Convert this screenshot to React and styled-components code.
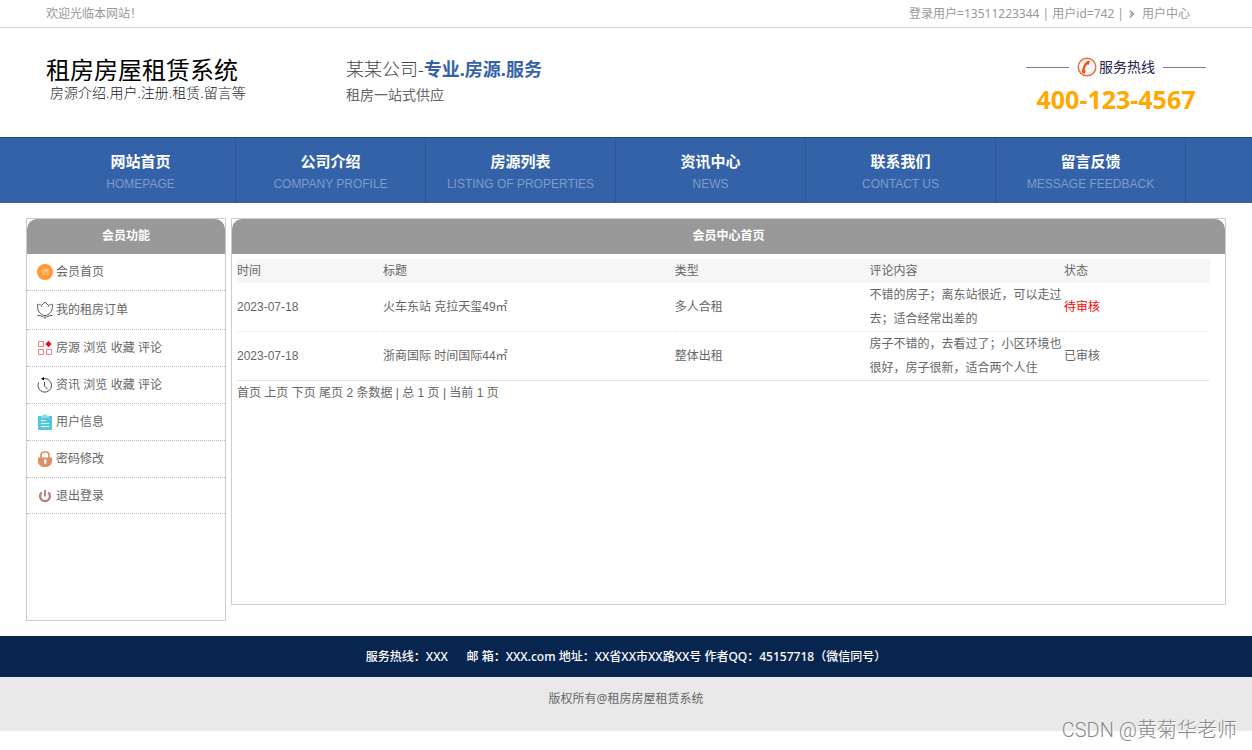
import React from "react";
import styled, { createGlobalStyle } from "styled-components";

const GlobalStyle = createGlobalStyle`
  * { box-sizing: border-box; }
  body {
    margin: 0;
    background: #fff;
    color: #666;
    font: 12px/24px "Liberation Sans", "Noto Sans CJK SC", sans-serif;
  }
  a { color: inherit; text-decoration: none; }
  ul, p, h1, h2 { margin: 0; padding: 0; list-style: none; }
`;

const uiFont = `"Noto Sans", "Noto Sans CJK SC", sans-serif`;

const Page = styled.div`
  position: relative;
  min-height: 750px;
`;

const Wrap = styled.div`
  max-width: 1160px;
  margin: 0 auto;
`;

const TopBar = styled.div`
  border-bottom: 1px solid #d9d9d9;
  color: #999;
  font-family: ${uiFont};
  line-height: 27px;
`;

const TopInner = styled(Wrap)`
  display: flex;
  justify-content: space-between;
  padding-right: 16px;
`;

const UserInfo = styled.div`
  display: flex;
  align-items: center;
  svg { margin: 0 7px 0 5px; }
`;

const HeaderInner = styled(Wrap)`
  display: flex;
  align-items: flex-start;
  height: 109px;
  padding-top: 27px;
  font-family: ${uiFont};
`;

const Brand = styled.div`
  flex: 0 0 300px;
`;

const BrandTitle = styled.h1`
  color: #000;
  font-size: 24px;
  font-weight: 400;
  line-height: 30px;
`;

const BrandSub = styled.p`
  padding-left: 4px;
  color: #222;
  font-size: 14px;
  font-weight: 300;
  line-height: 16px;
`;

const Slogan = styled.div`
  flex: 1;
`;

const SloganTitle = styled.h2`
  color: #444;
  font-size: 18px;
  font-weight: 300;
  line-height: 29px;
  strong { color: #3462a9; font-weight: 700; }
`;

const SloganSub = styled.p`
  font-size: 14px;
  line-height: 22px;
`;

const Hotline = styled.div`
  flex: 0 0 180px;
  text-align: center;
`;

const HotlineLabel = styled.div`
  display: flex;
  align-items: center;
  gap: 8px;
  color: #26224f;
  font-size: 14px;
  line-height: 24px;
  &::before, &::after {
    content: "";
    flex: 1;
    height: 1px;
    background: #7d77b3;
  }
  span { display: flex; align-items: center; gap: 2px; }
`;

const HotlineNumber = styled.div`
  color: #ffa800;
  font-size: 25px;
  font-weight: 700;
  line-height: 40px;
`;

const Nav = styled.nav`
  border-top: 1px solid #23477f;
  background: #3462a9;
`;

const NavList = styled(Wrap).attrs({ as: "ul" })`
  display: flex;
`;

const NavItem = styled.li`
  flex: 0 1 190px;
  border-right: 1px solid #2b5597;
  text-align: center;
`;

const NavLink = styled.a`
  display: block;
  height: 65px;
  padding-top: 12px;
  color: #fff;
  font-size: 15px;
  font-weight: 700;
  line-height: 24px;
  small {
    display: block;
    color: #7d9bcb;
    font-size: 12px;
    font-weight: 400;
    line-height: 20px;
  }
`;

const Main = styled.main`
  display: flex;
  align-items: flex-start;
  gap: 5px;
  max-width: 1200px;
  margin: 15px auto;
`;

const Panel = styled.section`
  flex: ${(p) => (p.$side ? "0 0 200px" : "1")};
  min-width: 0;
  min-height: ${(p) => (p.$side ? "403px" : "387px")};
  border: 1px solid #ccc;
`;

const PanelTitle = styled.h2`
  border-radius: 10px 10px 0 0;
  background: #999;
  color: #fff;
  font-size: 12px;
  line-height: 35px;
  text-align: center;
`;

const MenuItem = styled.li`
  border-bottom: 1px dotted #bbb;
`;

const MenuLink = styled.a`
  display: flex;
  align-items: center;
  gap: 3px;
  height: ${(p) => p.$height}px;
  padding-left: 10px;
`;

const TableArea = styled.div`
  padding: 5px 15px 0 5px;
`;

const Table = styled.table`
  width: 100%;
  border-collapse: separate;
  border-spacing: 0;
  table-layout: fixed;
  th, td { padding: 0; font-weight: 400; text-align: left; }
  th { background: #f6f6f6; }
  td { border-bottom: 1px dotted #e4e4e4; }
  tr:last-child td { border-bottom: 1px solid #e8e8e8; }
`;

const Col = styled.col`
  width: ${(p) => p.$width};
`;

const Status = styled.td`
  color: ${(p) => (p.$pending ? "#f00" : "inherit")};
`;

const Contact = styled.div`
  background: #08254f;
  color: #fff;
  font-family: ${uiFont};
  font-weight: 500;
  line-height: 41px;
  text-align: center;
  white-space: pre-wrap;
`;

const Copyright = styled.div`
  height: 54px;
  padding-top: 10px;
  background: #e9e9e9;
  font-family: ${uiFont};
  text-align: center;
`;

const Watermark = styled.div`
  position: absolute;
  right: 15px;
  bottom: 5px;
  color: #888;
  font: 300 20px/30px Roboto, "Noto Sans CJK SC", sans-serif;
  text-shadow: 1px 1px 0 #fff;
`;

const Icon = ({ size = 16, height = size, children }) => (
  <svg width={size} height={height} viewBox={`0 0 ${size} ${height}`} fill="none" aria-hidden="true">
    {children}
  </svg>
);

const icons = {
  home: (
    <Icon>
      <circle cx="8" cy="8" r="8" fill="#ff9a33" />
      <path d="M4 8.5 8.5 4.5l3.5 1V11H10V8.500H8.500V11H5V8z" fill="#ffb973" />
      <path d="m4 8 4.500-3.500 3 2" stroke="#ffd0a0" />
    </Icon>
  ),
  order: (
    <Icon height={18}>
      <path
        d="M.5 3.500c1.500-.4 2.700 0 4 .9L8 1l3.500 3.400c1.300-.9 2.500-1.300 4-.9.3 4-.8 7.500-3.500 9.500-1.200.9-2.500 1.500-4 1.500s-2.800-.6-4-1.500C1.300 11 .2 7.500.5 3.500zM4.500 4.400l.4 1.400M11.500 4.400l-.4 1.400"
        stroke="#4a4a4a"
        strokeWidth=".9"
      />
      <path d="M.5 14.500c2-.2 4 .3 6 1.800M15.500 14.500c-2-.2-4 .3-6 1.800M8 14.500V18" stroke="#555" />
    </Icon>
  ),
  house: (
    <Icon>
      <path d="M1.500 1.500h5v5h-5zM1.500 9.500h5v5h-5zM9.500 9.500h5v5h-5z" stroke="#f08088" />
      <path d="m11.500.8 3.200 3.200-3.200 3.200L8.300 4z" fill="#e60f1e" />
    </Icon>
  ),
  news: (
    <Icon>
      <path d="M1.700 5.300A6.800 6.800 0 1 0 7 1.600M7.500 5v4l3.300 3.300" stroke="#555" />
      <path d="M4 1.800 7 0v3.500z" fill="#000" />
    </Icon>
  ),
  user: (
    <Icon>
      <path d="M1 2h14v14H1z" fill="#56c7d8" />
      <path d="M4 1.500h2.500a1.500 1.500 0 0 1 3 0H12V4H4z" fill="#8bdce6" />
      <path d="M4 6.500h5M4 9.500h8M4 12.500h8" stroke="#e3f7fa" />
    </Icon>
  ),
  lock: (
    <Icon>
      <path d="M4 7V4a3 3 0 0 1 3-3h2a3 3 0 0 1 3 3v3" stroke="#df8f63" strokeWidth="1.700" />
      <path d="M1 6.500h14V10c0 4-3 6-7 6s-7-2-7-6z" fill="#df8f63" />
      <path d="M7 8.500h2.500V11L9 13H7.500L7 11z" fill="#fff" />
    </Icon>
  ),
  power: (
    <Icon>
      <path d="M4.800 4.300a5 5 0 1 0 6.400 0" stroke="#b87f7f" strokeWidth="2.300" />
      <path d="M8 2v6.500" stroke="#b87f7f" strokeWidth="2" />
    </Icon>
  ),
};

const navItems = [
  ["网站首页", "HOMEPAGE"],
  ["公司介绍", "COMPANY PROFILE"],
  ["房源列表", "LISTING OF PROPERTIES"],
  ["资讯中心", "NEWS"],
  ["联系我们", "CONTACT US"],
  ["留言反馈", "MESSAGE FEEDBACK"],
];

const menuItems = [
  { icon: "home", label: "会员首页", height: 36 },
  { icon: "order", label: "我的租房订单", height: 38 },
  { icon: "house", label: "房源 浏览 收藏 评论", height: 36 },
  { icon: "news", label: "资讯 浏览 收藏 评论", height: 36 },
  { icon: "user", label: "用户信息", height: 36 },
  { icon: "lock", label: "密码修改", height: 36 },
  { icon: "power", label: "退出登录", height: 35 },
];

const columns = [
  ["时间", "15%"],
  ["标题", "30%"],
  ["类型", "20%"],
  ["评论内容", "20%"],
  ["状态", "15%"],
];

const comments = [
  {
    date: "2023-07-18",
    title: "火车东站 克拉天玺49㎡",
    type: "多人合租",
    text: "不错的房子；离东站很近，可以走过去；适合经常出差的",
    status: "待审核",
    pending: true,
  },
  {
    date: "2023-07-18",
    title: "浙商国际 时间国际44㎡",
    type: "整体出租",
    text: "房子不错的，去看过了；小区环境也很好，房子很新，适合两个人住",
    status: "已审核",
  },
];

export default function App() {
  return (
    <Page>
      <GlobalStyle />
      <TopBar>
        <TopInner>
          <span>欢迎光临本网站！</span>
          <UserInfo>
            登录用户=13511223344 | 用户id=742 |
            <svg width="6" height="8" viewBox="0 0 6 8" fill="none" aria-hidden="true">
              <path d="M1 .5 4.500 4 1 7.500" stroke="#444" />
              <path d="M1 2.500 2.500 4 1 5.500" stroke="#888" />
            </svg>
            <a href="#user">用户中心</a>
          </UserInfo>
        </TopInner>
      </TopBar>

      <header>
        <HeaderInner>
          <Brand>
            <BrandTitle>租房房屋租赁系统</BrandTitle>
            <BrandSub>房源介绍.用户.注册.租赁.留言等</BrandSub>
          </Brand>
          <Slogan>
            <SloganTitle>
              某某公司-<strong>专业.房源.服务</strong>
            </SloganTitle>
            <SloganSub>租房一站式供应</SloganSub>
          </Slogan>
          <Hotline>
            <HotlineLabel>
              <span>
                <Icon size={20}>
                  <circle cx="10" cy="10" r="8.800" fill="#f5f5fb" stroke="#f06a32" strokeWidth="1.400" />
                  <path d="M11.500 3.500c-3.500 1.500-6.500 6.500-6.500 12l2.500 1.500 1.200-3-1.200-1.200c.4-2 1.400-4 2.700-5.300l1.500.3L13 4.500z" fill="#ec5410" />
                </Icon>
                服务热线
              </span>
            </HotlineLabel>
            <HotlineNumber>400-123-4567</HotlineNumber>
          </Hotline>
        </HeaderInner>
        <Nav>
          <NavList>
            {navItems.map(([label, en]) => (
              <NavItem key={en}>
                <NavLink href="#nav">
                  {label}
                  <small>{en}</small>
                </NavLink>
              </NavItem>
            ))}
          </NavList>
        </Nav>
      </header>

      <Main>
        <Panel $side>
          <PanelTitle>会员功能</PanelTitle>
          <ul>
            {menuItems.map((item) => (
              <MenuItem key={item.label}>
                <MenuLink href="#menu" $height={item.height}>
                  {icons[item.icon]}
                  {item.label}
                </MenuLink>
              </MenuItem>
            ))}
          </ul>
        </Panel>
        <Panel>
          <PanelTitle>会员中心首页</PanelTitle>
          <TableArea>
            <Table>
              <colgroup>
                {columns.map(([name, width]) => (
                  <Col key={name} $width={width} />
                ))}
              </colgroup>
              <thead>
                <tr>
                  {columns.map(([name]) => (
                    <th key={name} scope="col">{name}</th>
                  ))}
                </tr>
              </thead>
              <tbody>
                {comments.map((c) => (
                  <tr key={c.title}>
                    <td>{c.date}</td>
                    <td>{c.title}</td>
                    <td>{c.type}</td>
                    <td>{c.text}</td>
                    <Status $pending={c.pending}>{c.status}</Status>
                  </tr>
                ))}
              </tbody>
            </Table>
            <p>
              <a href="#first">首页</a> <a href="#prev">上页</a> <a href="#next">下页</a>{" "}
              <a href="#last">尾页</a> 2 条数据 | 总 1 页 | 当前 1 页
            </p>
          </TableArea>
        </Panel>
      </Main>

      <footer>
        <Contact>
          {"服务热线：XXX      邮 箱：XXX.com 地址：XX省XX市XX路XX号 作者QQ：45157718（微信同号）"}
        </Contact>
        <Copyright>版权所有@租房房屋租赁系统</Copyright>
      </footer>
      <Watermark>CSDN @黄菊华老师</Watermark>
    </Page>
  );
}
